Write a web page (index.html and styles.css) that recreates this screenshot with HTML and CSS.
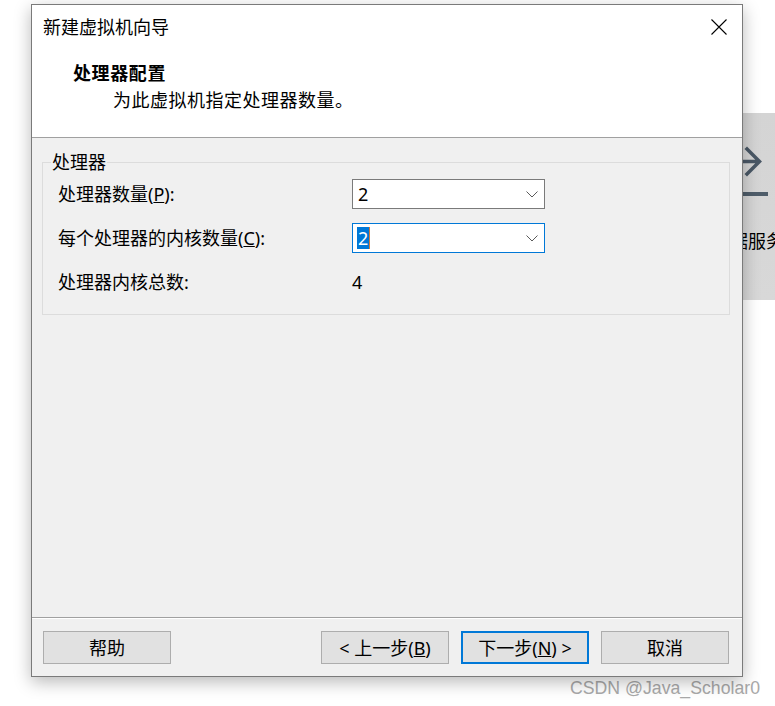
FILE: index.html
```html
<!DOCTYPE html>
<html lang="zh-CN">
<head>
<meta charset="utf-8">
<title>新建虚拟机向导</title>
<link rel="stylesheet" href="styles.css">
</head>
<body>
<div class="desktop">
  <div class="bg-panel">
    <svg class="bg-arrow" width="34" height="34" viewBox="0 0 34 34">
      <path d="M0 15.5 H26 M15 3 L27.5 15.5 L15 28" fill="none" stroke="#4a5866" stroke-width="3.5" stroke-linecap="square"/>
    </svg>
    <div class="bg-bar"></div>
    <div class="bg-text">据服务</div>
  </div>

  <div class="dialog">
    <div class="titlebar">
      <span class="title">新建虚拟机向导</span>
      <svg class="close" width="16" height="16" viewBox="0 0 16 16">
        <path d="M0.5 0.5 L15.5 15.5 M15.5 0.5 L0.5 15.5" stroke="#000" stroke-width="1.1" fill="none"/>
      </svg>
    </div>
    <div class="header">
      <div class="heading">处理器配置</div>
      <div class="subtitle">为此虚拟机指定处理器数量。</div>
    </div>
    <div class="content">
      <fieldset class="group">
        <legend>处理器</legend>
        <div class="grid">
          <label class="lbl">处理器数量(<u>P</u>):</label>
          <div class="combo">
            <span class="val">2</span>
            <svg class="chev" width="12" height="7" viewBox="0 0 12 7"><path d="M0.5 0.5 L6 6 L11.5 0.5" fill="none" stroke="#5a5a5a" stroke-width="1"/></svg>
          </div>
          <label class="lbl">每个处理器的内核数量(<u>C</u>):</label>
          <div class="combo focus">
            <span class="val"><span class="sel">2</span><span class="caret"></span></span>
            <svg class="chev" width="12" height="7" viewBox="0 0 12 7"><path d="M0.5 0.5 L6 6 L11.5 0.5" fill="none" stroke="#5a5a5a" stroke-width="1"/></svg>
          </div>
          <span class="lbl">处理器内核总数:</span>
          <span class="total">4</span>
        </div>
      </fieldset>
    </div>
    <div class="footer">
      <button class="btn">帮助</button>
      <div class="nav">
        <button class="btn">&lt; 上一步(<u>B</u>)</button>
        <button class="btn primary">下一步(<u>N</u>) &gt;</button>
        <button class="btn">取消</button>
      </div>
    </div>
  </div>

  <div class="watermark">CSDN @Java_Scholar0</div>
</div>
</body>
</html>
```
FILE: styles.css
```css
html, body {
  margin: 0;
  padding: 0;
  background: #ffffff;
}

.desktop {
  position: relative;
  width: 775px;
  height: 706px;
  overflow: hidden;
  font-family: "Noto Sans", "Noto Sans CJK SC", sans-serif;
  color: #000;
}

/* window partially hidden behind the dialog */
.bg-panel {
  position: absolute;
  left: 690px;
  top: 113px;
  width: 85px;
  height: 187px;
  background: linear-gradient(to bottom, #d4d4d4, #d8d8d8);
}

.bg-arrow {
  position: absolute;
  left: 42px;
  top: 33px;
}

.bg-bar {
  position: absolute;
  left: 40px;
  top: 79px;
  width: 38px;
  height: 4px;
  background: #4f5d6a;
}

.bg-text {
  position: absolute;
  left: 40px;
  top: 115px;
  font-family: "Noto Sans CJK SC", sans-serif;
  font-size: 18px;
  line-height: 24px;
  white-space: nowrap;
}

.dialog {
  position: relative;
  z-index: 1;
  margin: 4px 0 0 31px;
  width: 712px;
  height: 673px;
  box-sizing: border-box;
  border: 1px solid #7a7a7a;
  background: #f0f0f0;
  display: flex;
  flex-direction: column;
  box-shadow: 0 5px 16px rgba(0, 0, 0, 0.28);
}

.titlebar {
  height: 44px;
  flex: none;
  background: #fff;
  display: flex;
  align-items: center;
  justify-content: space-between;
  padding: 0 15px 0 11px;
}

.title {
  font-size: 18px;
  line-height: 24px;
}

.close {
  display: block;
}

.header {
  height: 89px;
  flex: none;
  box-sizing: border-box;
  background: #fff;
  border-bottom: 1px solid #a0a0a0;
  padding: 12px 0 0 41px;
}

.heading {
  font-size: 18px;
  line-height: 24px;
  font-weight: bold;
  letter-spacing: 0.6px;
}

.subtitle {
  margin-top: 3px;
  padding-left: 40px;
  font-size: 18px;
  line-height: 24px;
  letter-spacing: 0.5px;
}

.content {
  flex: 1;
  padding: 14px 12px 0 10px;
}

.group {
  margin: 0;
  min-width: 0;
  border: 1px solid #dcdcdc;
  padding: 0 0 17px 8px;
}

.group legend {
  padding: 0 1px;
  font-size: 18px;
  line-height: 20px;
}

.grid {
  margin: 7px 0 0 7px;
  display: grid;
  grid-template-columns: 294px 193px;
  grid-template-rows: 30px 30px 30px;
  row-gap: 14px;
  align-items: center;
}

.lbl {
  font-size: 18px;
  line-height: 24px;
}

.combo {
  height: 30px;
  box-sizing: border-box;
  border: 1px solid #7a7a7a;
  background: #fff;
  display: flex;
  align-items: center;
  justify-content: space-between;
  padding: 0 6px 0 5px;
}

.combo.focus {
  border-color: #0078d7;
}

.val {
  display: flex;
  align-items: center;
  font-size: 18px;
  line-height: 22px;
}

.sel {
  background: #0078d7;
  color: #fff;
  margin-left: -1px;
  padding: 0 1px;
}

.caret {
  width: 1px;
  height: 22px;
  background: #d27a3a;
}

.chev {
  display: block;
}

.total {
  font-size: 18px;
  line-height: 24px;
}

.footer {
  height: 59px;
  flex: none;
  box-sizing: border-box;
  border-top: 1px solid #a0a0a0;
  box-shadow: inset 0 1px 0 #ffffff;
  padding: 13px 13px 0 11px;
  display: flex;
  justify-content: space-between;
  align-items: flex-start;
}

.nav {
  display: flex;
  gap: 12px;
}

.btn {
  width: 128px;
  height: 33px;
  box-sizing: border-box;
  border: 1px solid #adadad;
  background: #e1e1e1;
  font-family: "Noto Sans", "Noto Sans CJK SC", sans-serif;
  font-size: 18px;
  line-height: 24px;
  color: #000;
  padding: 0;
  margin: 0;
}

.btn.primary {
  border: 2px solid #0078d7;
}

.watermark {
  position: absolute;
  left: 570px;
  top: 677px;
  font-family: "Liberation Sans", Arial, sans-serif;
  font-size: 17.7px;
  line-height: 22px;
  color: #a9a9a9;
  white-space: nowrap;
}
```
